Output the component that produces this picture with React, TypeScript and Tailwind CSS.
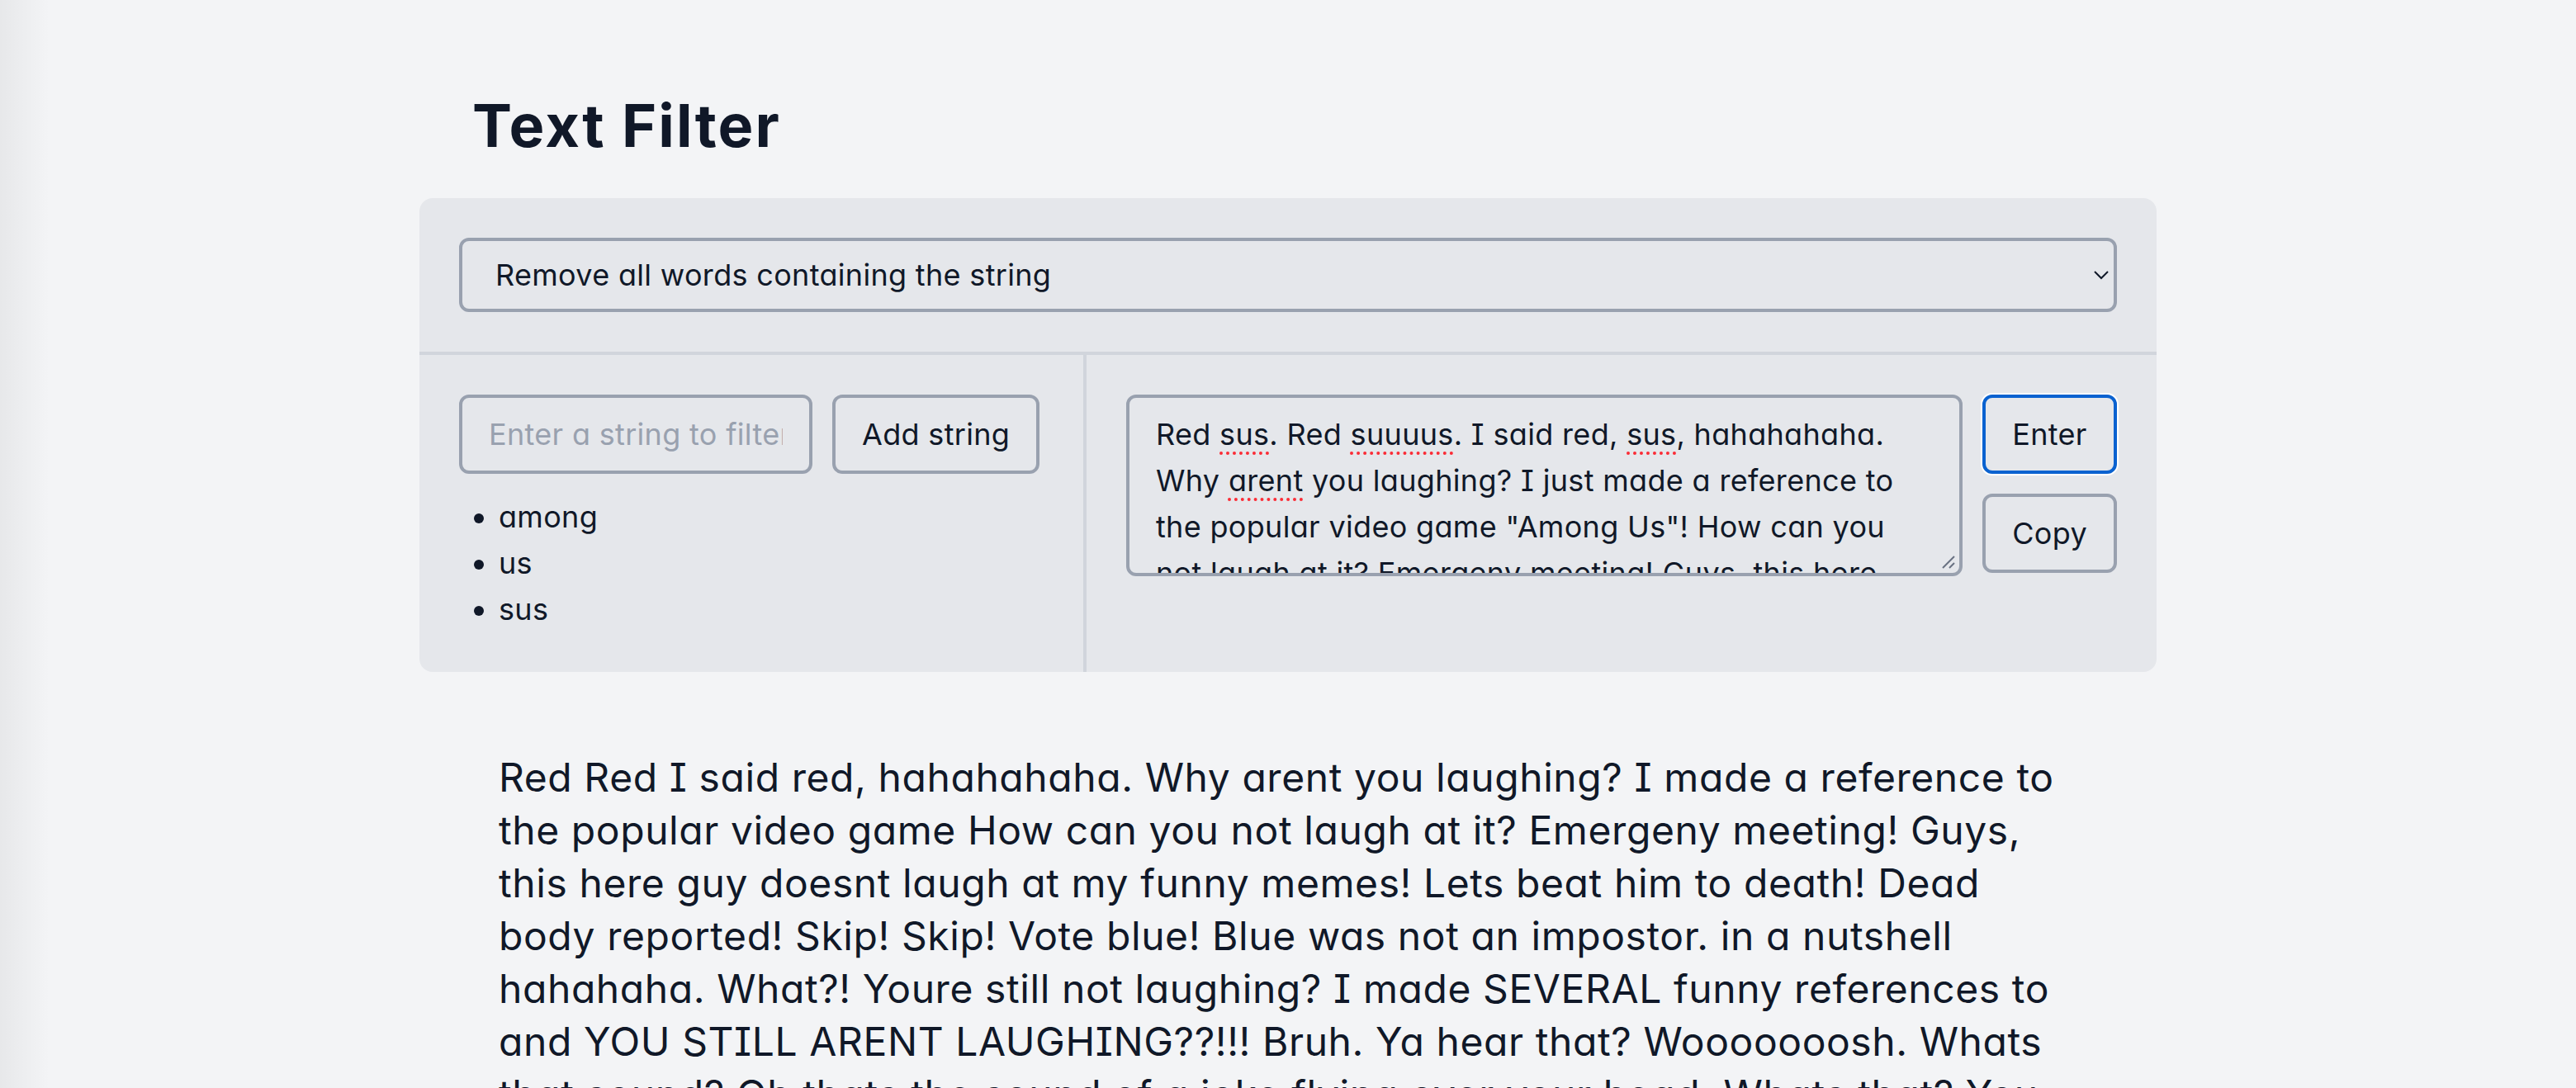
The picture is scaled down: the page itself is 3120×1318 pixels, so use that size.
import { useState } from "react";

const SOURCE_TEXT =
  'Red sus. Red suuuus. I said red, sus, hahahahaha. Why arent you laughing? I just made a reference to the popular video game "Among Us"! How can you not laugh at it? Emergeny meeting! Guys, this here guy doesnt laugh at my funny Among Us memes! Lets beat him to death! Dead body reported! Skip! Skip! Vote blue! Blue was not an impostor. Among us in a nutshell hahahaha. What?! Youre still not laughing? I just made SEVERAL funny references to Among Us and YOU STILL ARENT LAUGHING??!!! Bruh. Ya hear that? Wooooooosh. Whats that sound? Oh thats the sound of a joke flying over your head. Whats that? You think im annoying? Kinda sus, bro.';

const FLAGGED = ["sus.", "suuuus.", "sus,", "arent"];

function filterText(text: string, strings: string[]) {
  return text
    .split(" ")
    .filter((w) => !strings.some((s) => w.toLowerCase().includes(s)))
    .join(" ");
}

export default function App() {
  const [strings] = useState<string[]>(["among", "us", "sus"]);
  const [input] = useState(SOURCE_TEXT);
  const output = filterText(input, strings);

  return (
    <div className="[zoom:2] relative min-h-screen bg-gray-100 font-['Inter',sans-serif] tracking-[0.01em] text-gray-900 [font-feature-settings:'cv08','cv11']">
      <div className="absolute left-0 top-0 h-full w-[30px] bg-gradient-to-r from-black/[0.05] to-transparent" />

      <div className="mx-auto w-[1052px] pt-[56px]">
        <h1 className="mb-6 px-8 text-4xl font-bold tracking-[0.03em]">Text Filter</h1>

        <div className="rounded-lg bg-gray-200">
          {/* Mode select */}
          <div className="border-b-2 border-gray-300 p-6">
            <select className="h-[45px] w-full rounded-md border-2 border-gray-400 bg-transparent px-4 text-lg">
              <option>Remove all words containing the string</option>
              <option>Remove all words matching the string</option>
            </select>
          </div>

          <div className="flex">
            {/* Strings */}
            <div className="w-[404px] border-r-2 border-gray-300 p-6">
              <div className="flex gap-3">
                <input
                  type="text"
                  placeholder="Enter a string to filter"
                  className="h-12 w-[214px] rounded-md border-2 border-gray-400 bg-transparent px-4 text-lg placeholder:text-gray-400"
                />
                <button className="h-12 rounded-md border-2 border-gray-400 px-4 text-lg">
                  Add string
                </button>
              </div>
              <ul className="mt-3 list-disc pl-6 text-lg leading-7">
                {strings.map((s) => (
                  <li key={s}>{s}</li>
                ))}
              </ul>
            </div>

            {/* Input text */}
            <div className="flex flex-1 gap-3 p-6">
              <div className="relative h-[110px] flex-1 overflow-hidden rounded-md border-2 border-gray-400 px-4 py-2 text-lg leading-7">
                {input.split(" ").map((w, i) => (
                  <span key={i}>
                    {FLAGGED.includes(w) ? (
                      <>
                        <span className="underline decoration-red-500 decoration-dotted decoration-2 underline-offset-4">
                          {w.replace(/[.,]$/, "")}
                        </span>
                        {w.match(/[.,]$/)?.[0]}
                      </>
                    ) : (
                      w
                    )}{" "}
                  </span>
                ))}
                <svg
                  className="absolute bottom-0.5 right-0.5 h-2.5 w-2.5 text-gray-500"
                  viewBox="0 0 10 10"
                  fill="none"
                  stroke="currentColor"
                  strokeWidth="1"
                >
                  <path d="M9 2 L2 9 M9 6 L6 9" />
                </svg>
              </div>
              <div className="flex flex-col items-start gap-3">
                <button className="h-12 rounded-md border-2 border-[#0a62d0] px-4 text-lg shadow-[0_0_0_1px_white]">
                  Enter
                </button>
                <button className="h-12 rounded-md border-2 border-gray-400 px-4 text-lg">
                  Copy
                </button>
              </div>
            </div>
          </div>
        </div>

        <p className="p-12 text-2xl tracking-[0.012em]">{output}</p>
      </div>
    </div>
  );
}
